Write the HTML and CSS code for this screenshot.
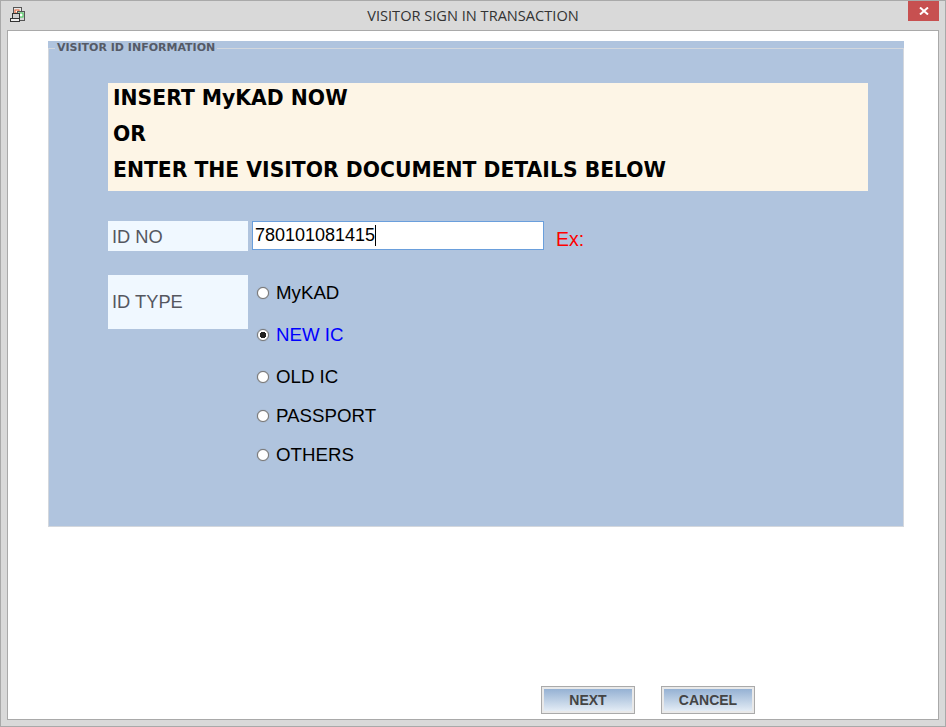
FILE: index.html
```html
<!doctype html>
<html lang="en">
<head>
    <meta charset="UTF-8">
    <title>VISITOR SIGN IN TRANSACTION</title>
    <link rel="stylesheet" href="styles.css">
</head>
<body>
    <div class="window">
        <div class="titlebar">
            <svg class="app-icon" width="16" height="16" viewBox="0 0 16 16">
                <rect x="3.5" y="0.5" width="8" height="8" fill="#e8e8e8" stroke="#555"/>
                <rect x="5" y="3" width="4" height="3" fill="#fff" stroke="#e05a2a" stroke-width="1"/>
                <rect x="7.5" y="4.5" width="7" height="9" fill="#d8d8d8" stroke="#555"/>
                <rect x="9" y="6" width="4" height="4" fill="#fff" stroke="#35c24a" stroke-width="1"/>
                <rect x="2.5" y="6.5" width="7" height="5" fill="#cfcfcf" stroke="#333"/>
                <rect x="0.5" y="11.5" width="9" height="3" fill="#eee" stroke="#333"/>
            </svg>
            <div class="title">VISITOR SIGN IN TRANSACTION</div>
            <div class="close-btn">
                <svg width="10" height="8" viewBox="0 0 10 8"><path d="M1 0.5 L9 7.5 M9 0.5 L1 7.5" stroke="#fff" stroke-width="2" fill="none"/></svg>
            </div>
        </div>
        <div class="client">
            <div class="group">
                <fieldset class="group-box">
                    <legend>VISITOR ID INFORMATION</legend>
                    <div class="group-body">
                        <div class="banner">
                            <div class="banner-line">INSERT MyKAD NOW</div>
                            <div class="banner-line">OR</div>
                            <div class="banner-line">ENTER THE VISITOR DOCUMENT DETAILS BELOW</div>
                        </div>
                        <div class="id-row">
                            <div class="field-label id-label">ID NO</div>
                            <div class="id-input">780101081415<span class="caret"></span></div>
                            <div class="hint">Ex:</div>
                        </div>
                        <div class="type-row">
                            <div class="field-label type-label">ID TYPE</div>
                            <div class="radio-list">
                                <label class="radio-row"><input type="radio" name="idtype">MyKAD</label>
                                <label class="radio-row selected"><input type="radio" name="idtype" checked>NEW IC</label>
                                <label class="radio-row"><input type="radio" name="idtype">OLD IC</label>
                                <label class="radio-row tight"><input type="radio" name="idtype">PASSPORT</label>
                                <label class="radio-row tight"><input type="radio" name="idtype">OTHERS</label>
                            </div>
                        </div>
                    </div>
                </fieldset>
            </div>
            <div class="actions">
                <button class="action-btn">NEXT</button>
                <button class="action-btn">CANCEL</button>
            </div>
        </div>
    </div>
</body>
</html>
```

FILE: styles.css
```css
html, body {
    margin: 0;
    padding: 0;
}
body {
    width: 946px;
    height: 727px;
    overflow: hidden;
    font-family: "Liberation Sans", Arial, sans-serif;
}
.window {
    box-sizing: border-box;
    width: 946px;
    height: 727px;
    display: flex;
    flex-direction: column;
    background-color: #d9d9d9;
    border: 1px solid #a9a9a9;
}
.titlebar {
    position: relative;
    height: 29px;
    flex: none;
}
.app-icon {
    position: absolute;
    left: 9px;
    top: 6px;
}
.title {
    text-align: center;
    font-family: "Open Sans", sans-serif;
    font-size: 14.6px;
    line-height: 29px;
    color: #333;
}
.close-btn {
    position: absolute;
    right: 6px;
    top: 0;
    width: 31px;
    height: 20px;
    background-color: #c75050;
    display: flex;
    align-items: center;
    justify-content: center;
}
.client {
    flex: 1;
    margin: 0 6px 6px 6px;
    background-color: #fff;
    border: 1px solid #a9a9a9;
    display: flex;
    flex-direction: column;
    padding: 10px 34px 0 40px;
}
.group {
    width: 856px;
    height: 486px;
    background-color: #b0c4de;
}
.group-box {
    box-sizing: border-box;
    height: 486px;
    margin: 0;
    padding: 0;
    border: 1px solid #d3d7dd;
    min-width: 0;
}
.group-box legend {
    margin-left: 6px;
    padding: 0 2px;
    font-family: "DejaVu Sans", sans-serif;
    font-weight: bold;
    font-size: 11px;
    line-height: 14px;
    color: #555a66;
}
.group-body {
    padding: 0 35px 0 59px;
}
.banner {
    margin-top: 28px;
    background-color: #fdf5e6;
    padding: 0 5px;
    font-family: "DejaVu Sans", sans-serif;
    font-weight: bold;
    font-size: 20.35px;
    color: #000;
}
.banner-line {
    height: 30px;
    padding-bottom: 6px;
    line-height: 30px;
}
.id-row {
    display: flex;
    height: 30px;
    margin-top: 30px;
}
.field-label {
    width: 140px;
    box-sizing: border-box;
    padding-left: 4px;
    background-color: #f0f8ff;
    color: #55575f;
    font-size: 18.3px;
}
.id-label {
    height: 30px;
    line-height: 32px;
}
.id-input {
    box-sizing: border-box;
    width: 292px;
    height: 29px;
    margin-left: 4px;
    padding-left: 2px;
    background-color: #fff;
    border: 1px solid #6a9fdc;
    font-size: 18px;
    line-height: 27px;
    color: #000;
    display: flex;
    align-items: center;
}
.caret {
    width: 1px;
    height: 21px;
    background-color: #000;
}
.hint {
    margin-left: 12px;
    color: #f00;
    font-size: 19.5px;
    line-height: 36px;
}
.type-row {
    display: flex;
    margin-top: 24px;
}
.type-label {
    height: 54px;
    line-height: 54px;
}
.radio-list {
    margin-left: 9px;
}
.radio-row {
    display: flex;
    align-items: center;
    height: 36px;
    margin-bottom: 6px;
    font-size: 18.7px;
    color: #000;
}
.radio-row.tight {
    margin-top: -3px;
}
.radio-row.selected {
    color: #00f;
}
.radio-row input {
    appearance: none;
    box-sizing: border-box;
    width: 12px;
    height: 12px;
    margin: 0 7px 0 0;
    border: 1px solid #777;
    border-radius: 50%;
    background-color: #fff;
    box-shadow: 0 0 1px #777;
}
.radio-row input:checked {
    background: radial-gradient(circle, #222 0 3px, #fff 3.5px);
}
.actions {
    margin-top: 159px;
    display: flex;
    gap: 26px;
    padding-left: 493px;
}
.action-btn {
    box-sizing: border-box;
    width: 94px;
    height: 28px;
    padding: 0;
    border: 1px solid #aaa;
    box-shadow: inset 0 0 0 2px #e9e9e9;
    background: linear-gradient(#8eacd0, #eaf1f8);
    font-family: "Liberation Sans", Arial, sans-serif;
    font-weight: bold;
    font-size: 14px;
    color: #444;
}
```
